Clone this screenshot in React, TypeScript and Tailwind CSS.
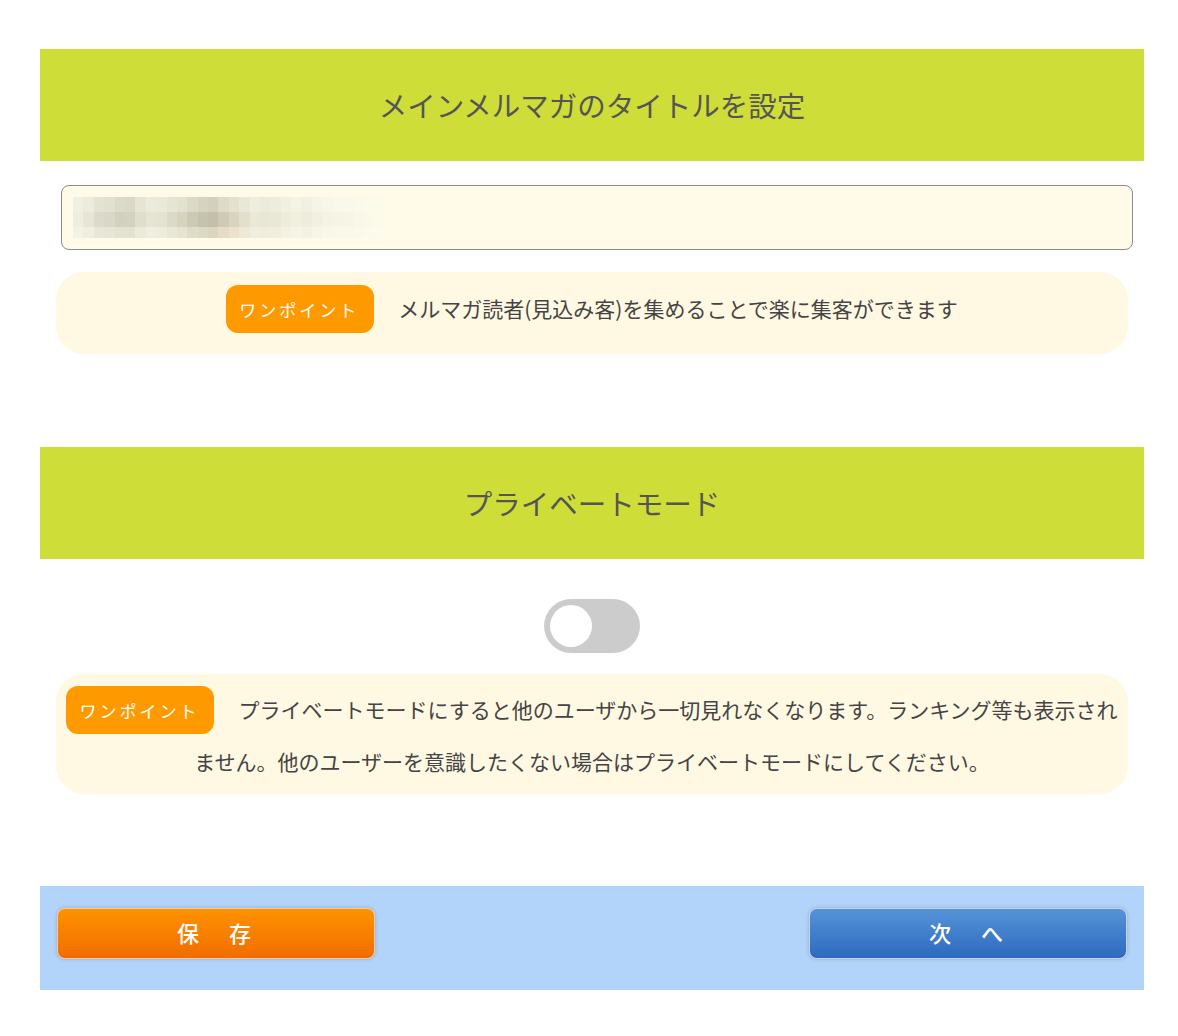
const font = { fontFamily: '"Noto Sans CJK JP", "Noto Sans", sans-serif' };

// ぼかし済みの入力値（モザイク）
const mosaic = [
  ["#f1f0e2", "#ecebdc", "#e4e3d2", "#e2e1d0", "#dcdbc9", "#dad9c7", "#e6e5d4", "#ecebdb", "#ebead9", "#e6e4d2", "#e3e1cf", "#dcdac7", "#d6d3c0", "#d3d0bc", "#dedbc8", "#e4e1cd", "#e9e7d5", "#eeedde", "#ecebdb", "#eeecdc", "#f2f0e0", "#f5f3e4", "#f2f1e1", "#f5f4e6", "#f8f6e8", "#f9f8ea", "#f9f8ea", "#fbf9ea", "#fcfaeb", "#fcfbea"],
  ["#eeeddf", "#e6e5d6", "#dcdbcb", "#d9d8c8", "#d2d1bf", "#d3d2bf", "#dfdecd", "#e6e5d4", "#e4e3d1", "#dcdac7", "#d6d3bf", "#ccc9b5", "#c6c2ad", "#c3bfaa", "#cfcab5", "#dad4bf", "#e3dfcb", "#ebe8d6", "#e8e6d4", "#eae7d5", "#eeecdb", "#f1efde", "#eeecdb", "#f2f0e1", "#f5f3e3", "#f6f4e4", "#f7f5e5", "#f9f7e7", "#fbf9e9", "#fcfae9"],
  ["#f3f2e5", "#efeee0", "#e9e8d8", "#e7e6d6", "#e3e2d1", "#e3e2d1", "#ebeadb", "#efeedf", "#eeeddd", "#e9e8d7", "#e6e4d2", "#dfddca", "#dcd9c5", "#dcd6c1", "#e6dcc5", "#ece2cb", "#efe8d4", "#f2eedd", "#f0eddc", "#f1eedd", "#f4f2e2", "#f6f4e5", "#f4f3e3", "#f7f5e7", "#f9f7e9", "#faf8ea", "#faf8ea", "#fbf9eb", "#fcfaec", "#fdfbec"],
];

function Badge() {
  return (
    <span className="inline-flex h-[48px] w-[148px] items-center justify-center rounded-[12px] bg-[#ff9900] pr-[2px] align-middle text-[17px] leading-none tracking-[3px] text-white">
      ワンポイント
    </span>
  );
}

function SectionHeader({ title }: { title: string }) {
  return (
    <div className="flex h-[112px] items-center justify-center bg-[#cfdd38]">
      <h2 className="text-[28.5px] font-normal text-[#555555]">{title}</h2>
    </div>
  );
}

export default function App() {
  return (
    <div className="min-h-[1036px] bg-white pt-[49px]" style={font}>
      <div className="ml-[40px] w-[1104px]">
        <SectionHeader title="メインメルマガのタイトルを設定" />

        <div className="ml-[21px] mt-[24px] flex h-[65px] w-[1072px] items-center rounded-[8px] border border-[#8c8c8c] bg-[#fffbe8] pl-[11px]">
          <div className="flex flex-col blur-[0.3px]">
            {mosaic.map((row, r) => (
              <div key={r} className={r === 2 ? "flex h-[11px]" : "flex h-[15px]"}>
                {row.map((c, i) => (
                  <div key={i} className="h-full w-[10.4px]" style={{ backgroundColor: c }} />
                ))}
              </div>
            ))}
          </div>
        </div>

        <div className="mx-[16px] mt-[22px] flex h-[82px] items-center justify-center rounded-[28px] bg-[#fff8e3] pb-[8px]">
          <Badge />
          <span className="ml-[24px] text-[21px] text-[#444444]">
            メルマガ読者(見込み客)を集めることで楽に集客ができます
          </span>
        </div>

        <div className="mt-[93px]">
          <SectionHeader title="プライベートモード" />
        </div>

        <div className="mt-[40px] flex justify-center">
          <button className="flex h-[54px] w-[96px] items-center rounded-full bg-[#cccccc] px-[6px]">
            <span className="h-[42px] w-[42px] rounded-full bg-white" />
          </button>
        </div>

        <div className="mx-[16px] mt-[21px] rounded-[28px] bg-[#fff8e3] px-[6px] pb-[8px] pt-[10px] text-center text-[21px] leading-[50px] text-[#444444]">
          <span className="mr-[24px] inline-block -translate-y-[2px] align-middle leading-none">
            <Badge />
          </span>
          プライベートモードにすると他のユーザから一切見れなくなります。ランキング等も表示されません。他のユーザーを意識したくない場合はプライベートモードにしてください。
        </div>

        <div className="mt-[92px] flex h-[104px] items-start justify-between bg-[#b3d4fa] px-[17px] pt-[22px]">
          <button className="flex h-[51px] w-[318px] items-center justify-center rounded-[8px] border border-[#f6c89a] bg-gradient-to-b from-[#ff9200] to-[#f06d00] pb-[2px] text-[22px] font-medium tracking-[4px] text-white shadow-[0_0_4px_rgba(0,0,0,0.2)]">
            保　存
          </button>
          <button className="flex h-[51px] w-[318px] items-center justify-center rounded-[8px] border border-[#c5d3e6] bg-gradient-to-b from-[#5694d9] to-[#2d69bd] pb-[2px] text-[22px] font-medium tracking-[4px] text-white shadow-[0_0_4px_rgba(0,0,0,0.2)]">
            次　へ
          </button>
        </div>
      </div>
    </div>
  );
}
